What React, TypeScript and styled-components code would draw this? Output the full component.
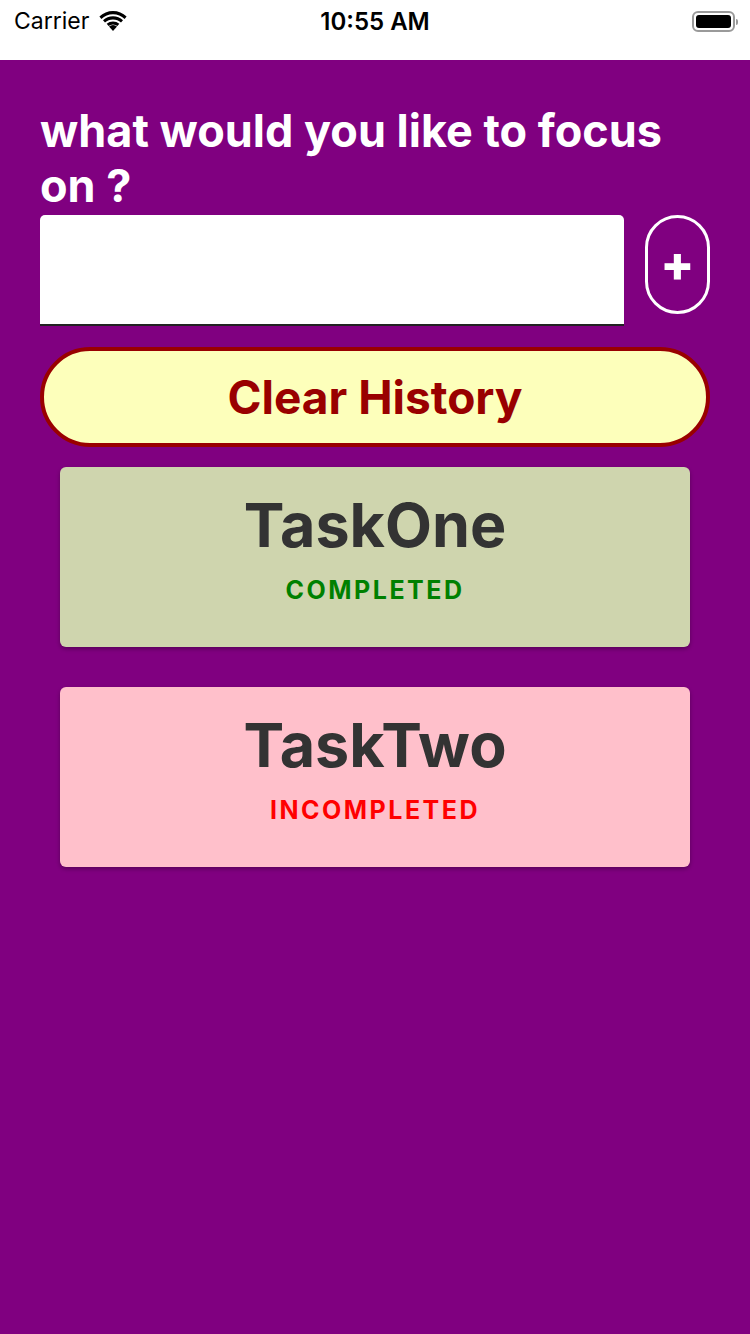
import React from 'react'
import styled, { createGlobalStyle } from 'styled-components'

const GlobalStyle = createGlobalStyle`
  html, body {
    margin: 0;
    padding: 0;
    background: #800080;
  }
  * {
    box-sizing: border-box;
  }
`

const font = `Inter, Roboto, 'Liberation Sans', sans-serif`

const Screen = styled.div`
  width: 750px;
  min-height: 1334px;
  background: #800080;
  font-family: ${font};
`

const StatusBar = styled.div`
  height: 60px;
  background: #fff;
  display: grid;
  grid-template-columns: 1fr auto 1fr;
  align-items: center;
  padding: 0 14px 18px;
  color: #000;
`

const Carrier = styled.div`
  display: flex;
  align-items: center;
  gap: 9px;
  font-size: 23px;
`

const Clock = styled.div`
  font-size: 24px;
  font-weight: 600;
`

const BatteryWrap = styled.div`
  display: flex;
  justify-content: flex-end;
  align-items: center;
  padding-right: 1px;
`

const Battery = styled.div`
  width: 43px;
  height: 21px;
  border: 2px solid #9a9a9a;
  border-radius: 6px;
  padding: 2px;
  position: relative;
  &::after {
    content: '';
    position: absolute;
    right: -5px;
    top: 6px;
    width: 2px;
    height: 6px;
    border-radius: 0 2px 2px 0;
    background: #9a9a9a;
  }
`

const BatteryLevel = styled.div`
  width: 100%;
  height: 100%;
  background: #000;
  border-radius: 3px;
`

const Content = styled.div`
  padding: 43px 40px 0;
`

const Heading = styled.h1`
  margin: 0 0 2px;
  color: #fff;
  font-size: 45px;
  line-height: 55px;
  font-weight: 700;
`

const InputRow = styled.div`
  display: flex;
  align-items: flex-start;
  gap: 21px;
`

const TaskInput = styled.input`
  flex: 1;
  height: 111px;
  border: none;
  border-bottom: 2px solid #222;
  border-radius: 5px 5px 0 0;
  background: #fff;
  font-size: 30px;
  padding: 0 16px;
  outline: none;
`

const AddButton = styled.button`
  width: 65px;
  height: 99px;
  border: 3px solid #fff;
  border-radius: 33px;
  background: transparent;
  color: #fff;
  font-family: ${font};
  font-size: 50px;
  font-weight: 800;
  line-height: 1;
  display: flex;
  align-items: center;
  justify-content: center;
  padding: 0 0 4px;
`

const ClearButton = styled.button`
  display: block;
  width: 100%;
  height: 100px;
  margin-top: 21px;
  background: #fdffbb;
  border: 4px solid #990000;
  border-radius: 50px;
  color: #990000;
  font-family: ${font};
  font-size: 46px;
  font-weight: 700;
`

const TaskList = styled.div`
  display: flex;
  flex-direction: column;
  gap: 40px;
  padding: 20px 60px 0;
`

const TaskCard = styled.div<{ $done: boolean }>`
  height: 180px;
  border-radius: 6px;
  background: ${p => (p.$done ? '#cfd5ae' : '#ffc0cb')};
  box-shadow: 0 2px 4px rgba(0, 0, 0, 0.3);
  display: flex;
  flex-direction: column;
  align-items: center;
  padding-top: 22px;
`

const TaskTitle = styled.div`
  color: #333;
  font-size: 61px;
  font-weight: 700;
  line-height: 72px;
`

const TaskStatus = styled.div<{ $done: boolean }>`
  margin-top: 14px;
  color: ${p => (p.$done ? '#008000' : '#ff0000')};
  font-size: 25px;
  font-weight: 700;
  letter-spacing: 2.5px;
`

const WifiIcon = () => (
  <svg width="30" height="22" viewBox="0 0 30 22">
    <path d="M15 21 L11 16.5 A6 6 0 0 1 19 16.5 Z" fill="#000" />
    <path d="M8.7 13.8 A9.5 9.5 0 0 1 21.3 13.8 L19.4 16 A6.8 6.8 0 0 0 10.6 16 Z" fill="#000" />
    <path d="M5 10.3 A14.5 14.5 0 0 1 25 10.3 L23 12.6 A11.6 11.6 0 0 0 7 12.6 Z" fill="#000" />
    <path d="M1.4 6.6 A19.5 19.5 0 0 1 28.6 6.6 L26.6 9 A16.6 16.6 0 0 0 3.4 9 Z" fill="#000" />
  </svg>
)

const tasks = [
  { name: 'TaskOne', done: true },
  { name: 'TaskTwo', done: false }
]

export default function App() {
  return (
    <Screen>
      <GlobalStyle />
      <StatusBar>
        <Carrier>
          Carrier
          <WifiIcon />
        </Carrier>
        <Clock>10:55 AM</Clock>
        <BatteryWrap>
          <Battery>
            <BatteryLevel />
          </Battery>
        </BatteryWrap>
      </StatusBar>
      <Content>
        <Heading>what would you like to focus on ?</Heading>
        <InputRow>
          <TaskInput />
          <AddButton>+</AddButton>
        </InputRow>
        <ClearButton>Clear History</ClearButton>
      </Content>
      <TaskList>
        {tasks.map(t => (
          <TaskCard key={t.name} $done={t.done}>
            <TaskTitle>{t.name}</TaskTitle>
            <TaskStatus $done={t.done}>
              {t.done ? 'COMPLETED' : 'INCOMPLETED'}
            </TaskStatus>
          </TaskCard>
        ))}
      </TaskList>
    </Screen>
  )
}
